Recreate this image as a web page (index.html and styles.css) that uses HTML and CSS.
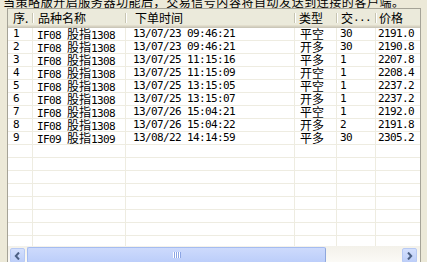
FILE: index.html
```html
<!DOCTYPE html>
<html lang="zh-CN">
<head>
<meta charset="utf-8">
<title>交易信号</title>
<link rel="stylesheet" href="styles.css">
</head>
<body>
<div class="top"><span class="top-text">当策略版开启服务器功能后，交易信号内容将自动发送到连接的客户端。</span></div>
<div class="list">
  <div class="head">
    <div class="hc h1">序.</div><div class="sep"></div>
    <div class="hc h2">品种名称</div><div class="sep"></div>
    <div class="hc h3">下单时间</div><div class="sep"></div>
    <div class="hc h4">类型</div><div class="sep"></div>
    <div class="hc h5">交<span class="lat">...</span></div><div class="sep"></div>
    <div class="hc h6">价格</div>
  </div>
  <div class="rows">
    <div class="c c1">1</div><div class="c c2">IF08 <span class="z">股指</span>1308</div><div class="c c3">13/07/23 09:46:21</div><div class="c c4 z">平空</div><div class="c c5">30</div><div class="c c6">2191.0</div>
    <div class="c c1">2</div><div class="c c2">IF08 <span class="z">股指</span>1308</div><div class="c c3">13/07/23 09:46:21</div><div class="c c4 z">开多</div><div class="c c5">30</div><div class="c c6">2190.8</div>
    <div class="c c1">3</div><div class="c c2">IF08 <span class="z">股指</span>1308</div><div class="c c3">13/07/25 11:15:16</div><div class="c c4 z">平多</div><div class="c c5">1</div><div class="c c6">2207.8</div>
    <div class="c c1">4</div><div class="c c2">IF08 <span class="z">股指</span>1308</div><div class="c c3">13/07/25 11:15:09</div><div class="c c4 z">开空</div><div class="c c5">1</div><div class="c c6">2208.4</div>
    <div class="c c1">5</div><div class="c c2">IF08 <span class="z">股指</span>1308</div><div class="c c3">13/07/25 13:15:05</div><div class="c c4 z">平空</div><div class="c c5">1</div><div class="c c6">2237.2</div>
    <div class="c c1">6</div><div class="c c2">IF08 <span class="z">股指</span>1308</div><div class="c c3">13/07/25 13:15:07</div><div class="c c4 z">开多</div><div class="c c5">1</div><div class="c c6">2237.2</div>
    <div class="c c1">7</div><div class="c c2">IF08 <span class="z">股指</span>1308</div><div class="c c3">13/07/26 15:04:21</div><div class="c c4 z">平空</div><div class="c c5">1</div><div class="c c6">2192.0</div>
    <div class="c c1">8</div><div class="c c2">IF08 <span class="z">股指</span>1308</div><div class="c c3">13/07/26 15:04:22</div><div class="c c4 z">开多</div><div class="c c5">2</div><div class="c c6">2191.8</div>
    <div class="c c1">9</div><div class="c c2">IF09 <span class="z">股指</span>1309</div><div class="c c3">13/08/22 14:14:59</div><div class="c c4 z">平多</div><div class="c c5">30</div><div class="c c6">2305.2</div>
    <div class="c"></div><div class="c"></div><div class="c"></div><div class="c"></div><div class="c"></div><div class="c"></div>
  </div>
  <div class="hs">
    <div class="btn btn-l">
      <svg width="7" height="8" viewBox="0 0 7 8"><polyline points="5,0.5 1.8,4 5,7.5" fill="none" stroke="#4D6185" stroke-width="2"/></svg>
    </div>
    <div class="thumb">
      <svg width="8" height="6" viewBox="0 0 8 6"><g fill="#fff"><rect x="0" y="0" width="1" height="6"/><rect x="2" y="0" width="1" height="6"/><rect x="4" y="0" width="1" height="6"/><rect x="6" y="0" width="1" height="6"/></g><g fill="#8CA5E4"><rect x="1" y="0" width="1" height="6"/><rect x="3" y="0" width="1" height="6"/><rect x="5" y="0" width="1" height="6"/><rect x="7" y="0" width="1" height="6"/></g></svg>
    </div>
    <div class="track"></div>
    <div class="btn btn-r">
      <svg width="7" height="8" viewBox="0 0 7 8"><polyline points="2,0.5 5.2,4 2,7.5" fill="none" stroke="#4D6185" stroke-width="2"/></svg>
    </div>
  </div>
</div>
</body>
</html>
```
FILE: styles.css
```css
* { box-sizing: border-box; }
html, body { margin: 0; padding: 0; }
body {
  width: 427px;
  height: 262px;
  overflow: hidden;
  background: #ECE9D8;
  color: #000;
  font-family: "DejaVu Sans Mono", "Noto Sans CJK SC", monospace;
  font-size: 11px;
}
.top {
  height: 8px;
  overflow: hidden;
  padding-left: 3px;
}
.top-text {
  display: block;
  margin-top: -5px;
  font-family: "Noto Sans CJK SC", sans-serif;
  font-size: 12px;
  line-height: 14px;
  letter-spacing: 0.55px;
  white-space: nowrap;
}
.list {
  margin-left: 7px;
  width: 414px;
  height: 254px;
  border: 1px solid #A5A397;
  border-bottom: none;
  background: #fff;
  display: flex;
  flex-direction: column;
  overflow: hidden;
}
.head {
  flex: none;
  height: 19px;
  display: flex;
  background: #EBEADB;
  box-shadow: inset 0 -1px #CBC7B8, inset 0 -2px #D6D2C2, inset 0 -3px #E2DECD;
}
.hc {
  flex: none;
  display: flex;
  align-items: center;
  padding-bottom: 2px;
  white-space: nowrap;
  overflow: hidden;
  font-family: "Noto Sans CJK SC", sans-serif;
  font-size: 12px;
  line-height: 14px;
}
.hc .lat {
  font-family: "DejaVu Sans Mono", monospace;
  font-size: 11px;
  letter-spacing: -0.62px;
}
.sep {
  flex: none;
  width: 2px;
  margin: 4px 0 5px;
  border-left: 1px solid #C7C5B2;
  border-right: 1px solid #fff;
}
.h1 { width: 24px; padding-left: 5px; }
.h2 { width: 91px; padding-left: 4px; }
.h3 { width: 167px; padding-left: 8px; }
.h4 { width: 40px; padding-left: 3px; }
.h5 { width: 37px; padding-left: 3px; }
.h6 { width: 60px; padding-left: 2px; }
.rows {
  flex: 1;
  display: grid;
  grid-template-columns: 25px 93px 169px 42px 39px 60px;
  grid-template-rows: repeat(9, 13px) 1fr;
  background: repeating-linear-gradient(to bottom, transparent 0, transparent 12px, #EEECE1 12px, #EEECE1 13px);
  overflow: hidden;
}
.c {
  border-right: 1px solid #EEECE1;
  white-space: nowrap;
  overflow: hidden;
  line-height: 12px;
  letter-spacing: -0.62px;
}
.z {
  font-family: "Noto Sans CJK SC", sans-serif;
  font-size: 12px;
  letter-spacing: 0;
}
.c1 { padding-left: 5px; }
.c2 { padding-left: 4px; }
.c3 { padding-left: 7px; }
.c4 { padding-left: 5px; }
.c5 { padding-left: 3px; }
.c6 { padding-left: 2px; }
.hs {
  flex: none;
  height: 16px;
  display: flex;
  align-items: flex-start;
  background: linear-gradient(#F3F1EA, #FBFAF6);
}
.btn {
  flex: none;
  width: 15px;
  height: 15px;
  margin-top: 2px;
  border: 1px solid #B7C9F3;
  border-radius: 2px;
  background: linear-gradient(#D4E0FD, #BCCDF8);
  display: flex;
  align-items: center;
  justify-content: center;
}
.btn-l { margin-left: 2px; }
.btn-r { margin-right: 3px; }
.thumb {
  flex: none;
  width: 299px;
  height: 16px;
  margin-top: 1px;
  margin-left: 2px;
  border: 1px solid #A5BCF0;
  border-right-color: #8FA7DD;
  border-radius: 2px;
  background: linear-gradient(#CDDAFC, #BCCEFA);
  display: flex;
  align-items: center;
  justify-content: center;
}
.track { flex: 1; }
```
